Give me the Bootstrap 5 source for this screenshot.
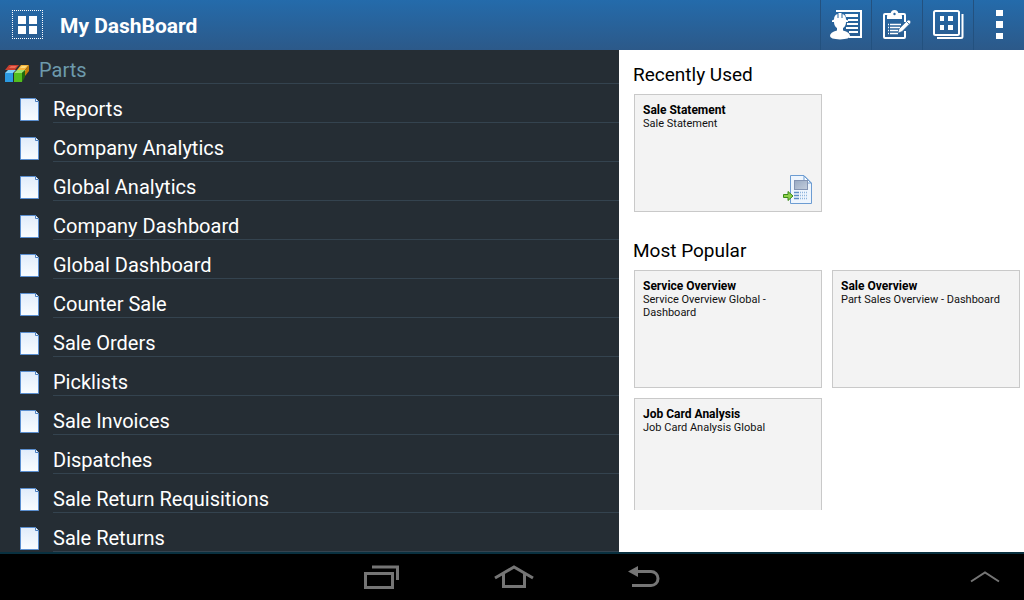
<!DOCTYPE html>
<html lang="en">
<head>
<meta charset="utf-8">
<meta name="viewport" content="width=device-width, initial-scale=1">
<title>My DashBoard</title>
<link href="https://cdn.jsdelivr.net/npm/bootstrap@5.3.0/dist/css/bootstrap.min.css" rel="stylesheet">
<style>
body { font-family: Roboto, "Liberation Sans", sans-serif; background: #fff; color: #000; }
svg { display: block; flex: none; }
.topbar { height: 50px; padding-left: 12px; background: linear-gradient(#246bab, #2c5989); color: #fff; }
.topbar h1 { font-size: 21px; line-height: 28px; font-weight: 700; margin-left: 17px; padding-top: 2px; }
.app-tile { border: 1px dotted #fff; width: 31px; height: 29px; }
.tool { width: 51px; border: 0; border-left: 1px solid #23517f; border-radius: 0; padding: 0; }
.side { background: #252d34; }
.group-row { height: 34px; padding-left: 4px; color: #6d9aac; }
.group-row h2 { font-size: 20px; line-height: 24px; font-weight: 400; margin-left: 9px; padding-top: 8px; border-bottom: 1px solid #34434f; }
.group-row svg { margin-top: 14px; }
.item { height: 39px; padding-left: 20px; color: #fff; font-size: 20px; line-height: 24px; }
.item:hover { color: #fff; }
.item .lbl { margin-left: 14px; padding-top: 13px; border-bottom: 1px solid #34434f; }
.item svg { margin-top: 14px; }
.panel { width: 405px; padding: 0 4px 42px 14px; }
.panel h2 { font-size: 19px; line-height: 24px; margin: 13px 0 7px; font-weight: 400; }
.panel section + section h2 { margin-top: 27px; }
.tiles { display: grid; grid-template-columns: 1fr 1fr; gap: 10px; padding-left: 1px; }
.tile { height: 118px; padding: 8px; background: #f3f3f3; border: 1px solid #c9c9c9; border-radius: 0; color: #111; }
.tile h3 { font-size: 12px; line-height: 14px; font-weight: 700; color: #000; }
.tile p { font-size: 11px; line-height: 13px; }
.tile svg { margin: auto 0 -3px auto; }
.sysbar { height: 48px; background: #000; border-top: 2px solid #09303f; }
.sysbar .btn { padding: 0; border: 0; border-radius: 0; }
.sys-main { gap: 94px; padding-left: 60px; }
.sys-end { width: 42px; margin-right: 18px; }
</style>
</head>
<body class="d-flex flex-column vh-100 overflow-hidden">
<svg width="0" height="0" class="position-absolute" aria-hidden="true">
  <defs>
    <linearGradient id="paper" x1="0" y1="0" x2="0" y2="1"><stop offset="0" stop-color="#e0ecfb"/><stop offset="1" stop-color="#fafdff"/></linearGradient>
    <linearGradient id="shot" x1="0" y1="0" x2="1" y2="1"><stop offset="0" stop-color="#98a9c2"/><stop offset="1" stop-color="#c3cddc"/></linearGradient>
    <symbol id="page" viewBox="0 0 19 23">
      <path d="M.5 .5H15.5L18.500 3.500V22.500H.5Z" fill="url(#paper)" stroke="#5b8fd0"/>
      <path d="M15.500 .5V3.500H18.500" fill="#fff" stroke="#4a7fc0"/>
    </symbol>
  </defs>
</svg>

<header class="topbar d-flex align-items-center">
  <div class="app-tile d-flex align-items-center justify-content-center">
    <svg width="19" height="18" fill="#fff"><path d="M0 0h8v8H0zM11 0h8v8h-8zM0 10h8v8H0zM11 10h8v8h-8z"/></svg>
  </div>
  <h1 class="mb-0 me-auto">My DashBoard</h1>
  <div class="d-flex align-self-stretch">
    <button class="btn tool d-flex align-items-center justify-content-center" type="button" aria-label="Worker details">
      <svg width="32" height="30" viewBox="0 0 32 30">
        <path d="M6 1H31V27H19" fill="none" stroke="#fff" stroke-width="2"/>
        <path d="M15 4h13v3H16zM18 9h10v2H18zM17 13h11v2H17zM16 17h12v2H16zM19 21h9v2h-9z" fill="#fff"/>
        <path d="M0 26Q0 22 7 20.500V18Q4 16 4 12H2V10.500L4 9.500Q4 5 7.500 4V8H8.500V3H11.500V8H12.500V4Q16 5 16 9.500L18 10.500V12H16Q16 16 13 18V20.500Q20 22 20 26Q20 29 10 29.500Q0 29 0 26Z" fill="#fff"/>
      </svg>
    </button>
    <button class="btn tool d-flex align-items-center justify-content-center" type="button" aria-label="Edit tasks">
      <svg width="28" height="30" viewBox="0 0 28 30">
        <path d="M22 21V27Q22 28 21 28H2Q1 28 1 27V5Q1 4 2 4H21Q22 4 22 5V12" fill="none" stroke="#fff" stroke-width="2"/>
        <path d="M4 9V6Q4 4 7.500 4Q8 0 11.500 0Q15 0 15.500 4Q19 4 19 6V9Z" fill="#fff"/>
        <circle cx="11.500" cy="4" r="1.200" fill="#2b659f"/>
        <path d="M5 14.500h1m1 0h11M5 17.500h1m1 0h10M5 20.500h1m1 0h8M5 23.500h1m1 0h8" stroke="#fff" stroke-width="1.300"/>
        <path d="M16 19L24.500 10.500Q26 9.500 27 10.500T27.500 13L19 21.500L15 23Z" fill="#fff" stroke="#2b6199" stroke-width=".5"/>
        <path d="M23.500 11.500L26 14" stroke="#2b6199" stroke-width=".8"/>
      </svg>
    </button>
    <button class="btn tool d-flex align-items-center justify-content-center" type="button" aria-label="Dashboards">
      <svg width="31" height="30" viewBox="0 0 31 30">
        <rect x="1" y="1" width="25" height="24" rx="1.500" fill="none" stroke="#fff" stroke-width="2"/>
        <path d="M29.500 4V26.500Q29.500 28 28 28H4" fill="none" stroke="#fff" stroke-width="2"/>
        <path d="M7 6h4v5H7zM15 6h5v5h-5zM7 15h4v5H7zM15 15h5v5h-5z" fill="#fff"/>
      </svg>
    </button>
    <button class="btn tool d-flex align-items-center justify-content-center" type="button" aria-label="More options">
      <svg width="7" height="30" fill="#fff"><path d="M0 0h7v6H0zM0 11h7v7H0zM0 23h7v6H0z"/></svg>
    </button>
  </div>
</header>

<main class="d-flex flex-fill overflow-hidden">
  <nav class="side flex-fill overflow-hidden" aria-label="Parts">
    <div class="group-row d-flex">
      <svg width="26" height="18" viewBox="0 0 26 18">
        <path d="M1 6L5 1H15L11 6Z" fill="#c9402f"/><path d="M5 4L7 2H13L11 4Z" fill="#ee6a55"/>
        <path d="M13 6L17 1H25L21 6Z" fill="#f5b53c"/><path d="M16 4L18 2H23L21 4Z" fill="#ffdc7c"/>
        <path d="M25 1V7L21 12V6Z" fill="#c47b08"/>
        <path d="M1 9L4 6H12L9 9Z" fill="#7fd0fa"/><rect x="1" y="9" width="8" height="9" fill="#2b9ae2"/>
        <path d="M10 9L13 6H22L18 9Z" fill="#9be66b"/><rect x="10" y="9" width="8" height="9" fill="#54bd1f"/>
        <path d="M18 9L21 6V13L18 18Z" fill="#1f6b0e"/>
      </svg>
      <h2 class="flex-fill mb-0">Parts</h2>
    </div>
    <a class="item d-flex text-decoration-none" href="#"><svg width="19" height="23"><use href="#page"/></svg><span class="lbl flex-fill">Reports</span></a>
    <a class="item d-flex text-decoration-none" href="#"><svg width="19" height="23"><use href="#page"/></svg><span class="lbl flex-fill">Company Analytics</span></a>
    <a class="item d-flex text-decoration-none" href="#"><svg width="19" height="23"><use href="#page"/></svg><span class="lbl flex-fill">Global Analytics</span></a>
    <a class="item d-flex text-decoration-none" href="#"><svg width="19" height="23"><use href="#page"/></svg><span class="lbl flex-fill">Company Dashboard</span></a>
    <a class="item d-flex text-decoration-none" href="#"><svg width="19" height="23"><use href="#page"/></svg><span class="lbl flex-fill">Global Dashboard</span></a>
    <a class="item d-flex text-decoration-none" href="#"><svg width="19" height="23"><use href="#page"/></svg><span class="lbl flex-fill">Counter Sale</span></a>
    <a class="item d-flex text-decoration-none" href="#"><svg width="19" height="23"><use href="#page"/></svg><span class="lbl flex-fill">Sale Orders</span></a>
    <a class="item d-flex text-decoration-none" href="#"><svg width="19" height="23"><use href="#page"/></svg><span class="lbl flex-fill">Picklists</span></a>
    <a class="item d-flex text-decoration-none" href="#"><svg width="19" height="23"><use href="#page"/></svg><span class="lbl flex-fill">Sale Invoices</span></a>
    <a class="item d-flex text-decoration-none" href="#"><svg width="19" height="23"><use href="#page"/></svg><span class="lbl flex-fill">Dispatches</span></a>
    <a class="item d-flex text-decoration-none" href="#"><svg width="19" height="23"><use href="#page"/></svg><span class="lbl flex-fill">Sale Return Requisitions</span></a>
    <a class="item d-flex text-decoration-none" href="#"><svg width="19" height="23"><use href="#page"/></svg><span class="lbl flex-fill">Sale Returns</span></a>
  </nav>

  <aside class="panel d-flex flex-column flex-shrink-0">
    <div class="flex-fill overflow-hidden">
      <section>
        <h2>Recently Used</h2>
        <div class="tiles">
          <a href="#" class="card tile text-decoration-none">
            <h3 class="mb-0">Sale Statement</h3>
            <p class="mb-0">Sale Statement</p>
            <svg width="32" height="32" viewBox="0 0 32 32">
              <path d="M9.500 1.500H23L30.500 9V29.500H9.500Z" fill="#eef5fd" stroke="#6c9cd2"/>
              <path d="M23 2V9H30Z" fill="#fff" stroke="#6c9cd2"/>
              <rect x="13.500" y="6.500" width="13" height="9" fill="url(#shot)" stroke="#8494b2"/>
              <path d="M13 18.500h5M13 21.500h5M13 24.500h5" stroke="#5d8ec4" stroke-width="1.500"/>
              <path d="M19 18.500h8M19 21.500h8M19 24.500h8" stroke="#8fb5dd" stroke-width="1.500" stroke-dasharray="1 1"/>
              <path d="M2.500 20.500H7V17.500L12 22L7 26.500V23.500H2.500Z" fill="#8fd04a" stroke="#3a8a18"/>
            </svg>
          </a>
        </div>
      </section>
      <section>
        <h2>Most Popular</h2>
        <div class="tiles">
          <a href="#" class="card tile text-decoration-none">
            <h3 class="mb-0">Service Overview</h3>
            <p class="mb-0">Service Overview Global - Dashboard</p>
          </a>
          <a href="#" class="card tile text-decoration-none">
            <h3 class="mb-0">Sale Overview</h3>
            <p class="mb-0">Part Sales Overview - Dashboard</p>
          </a>
          <a href="#" class="card tile text-decoration-none">
            <h3 class="mb-0">Job Card Analysis</h3>
            <p class="mb-0">Job Card Analysis Global</p>
          </a>
        </div>
      </section>
    </div>
  </aside>
</main>

<footer class="sysbar d-flex align-items-center">
  <div class="sys-main d-flex flex-fill justify-content-center">
    <button class="btn" type="button" aria-label="Recent apps">
      <svg width="36" height="24" viewBox="0 0 36 24" fill="none" stroke="#757575" stroke-width="3"><rect x="1.500" y="8.500" width="27" height="14"/><path d="M8 2H33.500V15"/></svg>
    </button>
    <button class="btn" type="button" aria-label="Home">
      <svg width="40" height="24" viewBox="0 0 40 24" fill="none" stroke="#757575" stroke-width="3"><path d="M1 13L20 2L39 13M9.500 9V21.500H30.500V9"/></svg>
    </button>
    <button class="btn" type="button" aria-label="Back">
      <svg width="32" height="24" viewBox="0 0 32 24"><path d="M8 6.500H23A7 7 0 0 1 23 20.500H4" fill="none" stroke="#757575" stroke-width="3"/><path d="M0 6.500L10 1V12Z" fill="#757575"/></svg>
    </button>
  </div>
  <button class="btn sys-end d-flex justify-content-center" type="button" aria-label="Expand tray">
    <svg width="30" height="12" viewBox="0 0 30 12"><path d="M1 10.500L15 1.500L29 10.500" fill="none" stroke="#757575" stroke-width="2"/></svg>
  </button>
</footer>
<script src="https://cdn.jsdelivr.net/npm/bootstrap@5.3.0/dist/js/bootstrap.bundle.min.js"></script>
</body>
</html>
